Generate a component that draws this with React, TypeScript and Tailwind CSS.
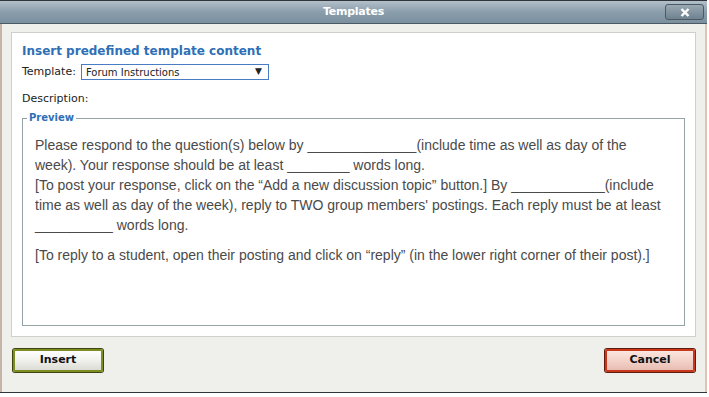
export default function App() {
  const sans = { fontFamily: '"DejaVu Sans", Verdana, sans-serif' };
  return (
    <div className="w-[709px] h-[397px] bg-white overflow-hidden">
      <div className="w-[707px] h-[393px] flex flex-col border-t border-b border-[#2f353a]" style={sans}>
        {/* title bar */}
        <div className="relative h-[23px] flex items-center justify-center bg-gradient-to-b from-[#b3c0ca] via-[#8a9dab] to-[#7b909f] border-b border-[#4a5964]">
          <span className="text-white font-bold text-[11px] tracking-tight" style={{ fontFamily: 'Tahoma, "DejaVu Sans", sans-serif' }}>
            Templates
          </span>
          <button className="absolute right-[3px] top-[3px] w-[39px] h-[16px] rounded-[3px] border border-[#4d5a63] bg-gradient-to-b from-[#9aa9b3] to-[#6f8290] flex items-center justify-center">
            <svg width="10" height="9" viewBox="0 0 10 9">
              <path d="M1.5 1 L8.5 8 M8.5 1 L1.5 8" stroke="white" strokeWidth="2.4" />
            </svg>
          </button>
        </div>
        {/* body */}
        <div className="flex-1 flex flex-col bg-[#efefeb] border-l-[2px] border-r-[2px] border-l-[#c4b5a8] border-r-[#dcc6b6] px-[9px] pt-[8px]">
          <div className="h-[305px] bg-white border border-[#cfcfcb] px-[10px] pt-[11px] flex flex-col">
            <h1 className="text-[12px] font-bold text-[#2f6fb6] leading-[15px]">Insert predefined template content</h1>
            <div className="flex items-center mt-[5px] h-[16px] text-[11px] text-[#222]">
              <span className="mr-[5px]">Template:</span>
              <div className="w-[188px] h-[16px] border border-[#4a7cc4] flex items-center justify-between pl-[4px] pr-[6px] text-[10px]">
                <span>Forum Instructions</span>
                <span className="text-[9px]">▼</span>
              </div>
            </div>
            <div className="mt-[12px] text-[11px] text-[#222] leading-[14px]">Description:</div>
            <fieldset className="mt-[6px] h-[214px] border border-[#95a3a6] px-[12px]">
              <legend className="-ml-[8px] px-[2px] text-[10px] font-bold text-[#2f6fb6] leading-[12px]">Preview</legend>
              <div
                className="w-[628px] mt-[11px] text-[14px] leading-[20px] text-[#4a4a4a]"
                style={{ fontFamily: '"Liberation Sans", Arial, sans-serif' }}
              >
                <p>
                  Please respond to the question(s) below by ______________(include time as well as day of the week).
                  Your response should be at least ________ words long.
                  <br />
                  [To post your response, click on the “Add a new discussion topic” button.] By ____________(include
                  time as well as day of the week), reply to TWO group members' postings. Each reply must be at least
                  __________ words long.
                </p>
                <p className="mt-[10px]">
                  [To reply to a student, open their posting and click on “reply” (in the lower right corner of their post).]
                </p>
              </div>
            </fieldset>
          </div>
          <div className="flex justify-between mt-[12px] px-[2px] pr-[1px]">
            <button className="w-[90px] h-[23px] rounded-[2px] border-[2px] border-[#7e8d1f] bg-gradient-to-b from-[#ffffff] via-[#f0f0ec] to-[#dcdcd6] shadow-[0_0_0_1px_#3d4410] text-[11px] font-bold text-[#111]">
              Insert
            </button>
            <button className="w-[90px] h-[23px] rounded-[2px] border-[2px] border-[#c9381a] bg-gradient-to-b from-[#fbe6e0] via-[#f3d2c9] to-[#e8bdb2] shadow-[0_0_0_1px_#5c1d0e] text-[11px] font-bold text-[#111]">
              Cancel
            </button>
          </div>
        </div>
      </div>
    </div>
  );
}
